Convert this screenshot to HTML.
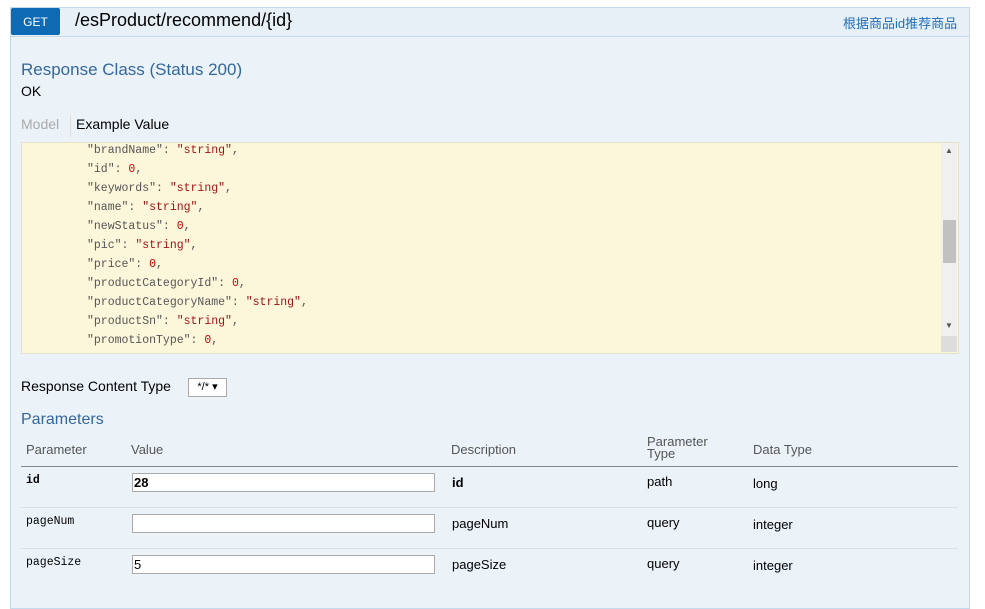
<!DOCTYPE html>
<html><head><meta charset="utf-8"><style>
body{margin:0;background:#fff;font-family:"Liberation Sans","Noto Sans CJK SC",sans-serif;width:985px;height:593px;overflow:hidden;position:relative}
.a{position:absolute}
.box{left:10px;top:7px;width:958px;height:600px;background:#ebf3f9;border:1px solid #c3d9ec}
.hd{left:11px;top:8px;width:958px;height:28px;background:#e7f0f7;border-bottom:1px solid #c3d9ec}
.get{left:11px;top:8px;width:49px;height:27px;background:#0f6ab4;color:#fff;font-size:12px;line-height:28px;text-align:center;border-radius:2px}
.code{left:21px;top:142px;width:936px;height:210px;background:#fcf6db;border:1px solid #e5e0c6;overflow:hidden}
.code pre{margin:0;position:absolute;left:65px;top:-2px;font-family:"Liberation Mono",monospace;font-size:11.5px;line-height:19px;color:#555}
.s{color:#a31515}.n{color:#c00}
.sb{left:941px;top:143px;width:16px;height:209px;background:#f0f0f0}
.th{top:442px;font-size:13px;color:#555}
.mono{font-family:"Liberation Mono",monospace;font-size:11.5px;color:#000}
.inp{left:132px;width:300px;height:17px;background:#fff;border:1px solid #aaa;font-size:13px;line-height:17px;padding-left:1px}
.hr{left:21px;width:937px;height:1px;background:#ddd}
.t{font-size:13px;color:#000}
</style></head><body>
<div class="a box"></div>
<div class="a hd"></div>
<div class="a get">GET</div>
<div class="a" style="left:75px;top:10px;font-size:18px;color:#000">/esProduct/recommend/{id}</div>
<div class="a" style="left:843px;top:13px;font-size:13px;color:#1f6fba">根据商品id推荐商品</div>
<div class="a" style="left:21px;top:60px;font-size:17px;color:#35679b">Response Class (Status 200)</div>
<div class="a" style="left:21px;top:83px;font-size:14px;color:#000">OK</div>
<div class="a" style="left:21px;top:116px;font-size:14px;color:#aaa">Model</div>
<div class="a" style="left:70px;top:115px;width:1px;height:22px;background:#ddd"></div>
<div class="a" style="left:76px;top:116px;font-size:14px;color:#000">Example Value</div>
<div class="a code"><pre>"brandName": <span class="s">"string"</span>,
"id": <span class="n">0</span>,
"keywords": <span class="s">"string"</span>,
"name": <span class="s">"string"</span>,
"newStatus": <span class="n">0</span>,
"pic": <span class="s">"string"</span>,
"price": <span class="n">0</span>,
"productCategoryId": <span class="n">0</span>,
"productCategoryName": <span class="s">"string"</span>,
"productSn": <span class="s">"string"</span>,
"promotionType": <span class="n">0</span>,</pre></div>
<div class="a sb"></div>
<div class="a" style="left:943px;top:220px;width:13px;height:43px;background:#c1c1c1"></div>
<div class="a" style="left:945px;top:146px;font-size:8px;color:#555">▲</div>
<div class="a" style="left:945px;top:321px;font-size:8px;color:#555">▼</div>
<div class="a" style="left:941px;top:336px;width:16px;height:16px;background:#ddd"></div>
<div class="a" style="left:21px;top:378px;font-size:14px;color:#000">Response Content Type</div>
<div class="a" style="left:188px;top:378px;width:37px;height:17px;border:1px solid #aaa;background:#fff;font-size:11px;line-height:17px;text-align:center">*/* ▾</div>
<div class="a" style="left:21px;top:411px;font-size:16px;color:#35679b">Parameters</div>
<div class="a th" style="left:26px">Parameter</div>
<div class="a th" style="left:131px">Value</div>
<div class="a th" style="left:451px">Description</div>
<div class="a" style="left:647px;top:436px;font-size:13px;color:#555;line-height:12px">Parameter<br>Type</div>
<div class="a th" style="left:753px">Data Type</div>
<div class="a" style="left:21px;top:466px;width:937px;height:1px;background:#888"></div>
<div class="a mono" style="left:26px;top:474px;font-weight:bold">id</div>
<div class="a inp" style="top:473px;font-weight:bold">28</div>
<div class="a t" style="left:452px;top:475px;font-weight:bold">id</div>
<div class="a t" style="left:647px;top:474px">path</div>
<div class="a t" style="left:753px;top:476px">long</div>
<div class="a hr" style="top:507px"></div>
<div class="a mono" style="left:26px;top:515px">pageNum</div>
<div class="a inp" style="top:514px"></div>
<div class="a t" style="left:452px;top:516px">pageNum</div>
<div class="a t" style="left:647px;top:515px">query</div>
<div class="a t" style="left:753px;top:517px">integer</div>
<div class="a hr" style="top:548px"></div>
<div class="a mono" style="left:26px;top:556px">pageSize</div>
<div class="a inp" style="top:555px">5</div>
<div class="a t" style="left:452px;top:557px">pageSize</div>
<div class="a t" style="left:647px;top:556px">query</div>
<div class="a t" style="left:753px;top:558px">integer</div>
</body></html>
